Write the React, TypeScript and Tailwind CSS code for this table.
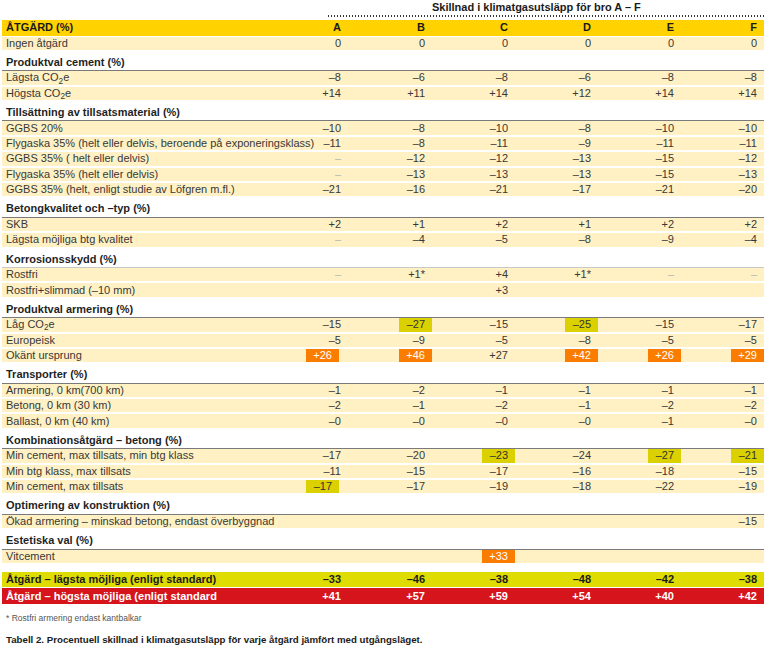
import type { ReactNode } from "react";

type Cell = string | { v: string; c: "g" | "o" };

const sections: { title: string; line?: string; rows: { label: ReactNode; vals: Cell[] }[] }[] = [
  {
    title: "Produktval cement (%)",
    rows: [
      { label: <>Lägsta CO<sub>2</sub>e</>, vals: ["–8", "–6", "–8", "–6", "–8", "–8"] },
      { label: <>Högsta CO<sub>2</sub>e</>, vals: ["+14", "+11", "+14", "+12", "+14", "+14"] },
    ],
  },
  {
    title: "Tillsättning av tillsatsmaterial (%)",
    rows: [
      { label: "GGBS 20%", vals: ["–10", "–8", "–10", "–8", "–10", "–10"] },
      { label: "Flygaska 35% (helt eller delvis, beroende på exponeringsklass)", vals: ["–11", "–8", "–11", "–9", "–11", "–11"] },
      { label: "GGBS 35% ( helt eller delvis)", vals: ["-", "–12", "–12", "–13", "–15", "–12"] },
      { label: "Flygaska 35% (helt eller delvis)", vals: ["-", "–13", "–13", "–13", "–15", "–13"] },
      { label: "GGBS 35% (helt, enligt studie av Löfgren m.fl.)", vals: ["–21", "–16", "–21", "–17", "–21", "–20"] },
    ],
  },
  {
    title: "Betongkvalitet och –typ (%)",
    rows: [
      { label: "SKB", vals: ["+2", "+1", "+2", "+1", "+2", "+2"] },
      { label: "Lägsta möjliga btg kvalitet", vals: ["-", "–4", "–5", "–8", "–9", "–4"] },
    ],
  },
  {
    title: "Korrosionsskydd (%)",
    line: "light",
    rows: [
      { label: "Rostfri", vals: ["-", "+1*", "+4", "+1*", "-", "-"] },
      { label: "Rostfri+slimmad (–10 mm)", vals: ["", "", "+3", "", "", ""] },
    ],
  },
  {
    title: "Produktval armering (%)",
    rows: [
      { label: <>Låg CO<sub>2</sub>e</>, vals: ["–15", { v: "–27", c: "g" }, "–15", { v: "–25", c: "g" }, "–15", "–17"] },
      { label: "Europeisk", vals: ["–5", "–9", "–5", "–8", "–5", "–5"] },
      {
        label: "Okänt ursprung",
        vals: [{ v: "+26", c: "o" }, { v: "+46", c: "o" }, "+27", { v: "+42", c: "o" }, { v: "+26", c: "o" }, { v: "+29", c: "o" }],
      },
    ],
  },
  {
    title: "Transporter (%)",
    rows: [
      { label: "Armering, 0 km(700 km)", vals: ["–1", "–2", "–1", "–1", "–1", "–1"] },
      { label: "Betong, 0 km (30 km)", vals: ["–2", "–1", "–2", "–1", "–2", "–2"] },
      { label: "Ballast, 0 km (40 km)", vals: ["–0", "–0", "–0", "–0", "–1", "–0"] },
    ],
  },
  {
    title: "Kombinationsåtgärd – betong (%)",
    rows: [
      { label: "Min cement, max tillsats, min btg klass", vals: ["–17", "–20", { v: "–23", c: "g" }, "–24", { v: "–27", c: "g" }, { v: "–21", c: "g" }] },
      { label: "Min btg klass, max tillsats", vals: ["–11", "–15", "–17", "–16", "–18", "–15"] },
      { label: "Min cement, max tillsats", vals: [{ v: "–17", c: "g" }, "–17", "–19", "–18", "–22", "–19"] },
    ],
  },
  {
    title: "Optimering av konstruktion (%)",
    rows: [{ label: "Ökad armering – minskad betong, endast överbyggnad", vals: ["", "", "", "", "", "–15"] }],
  },
  {
    title: "Estetiska val (%)",
    rows: [{ label: "Vitcement", vals: ["", "", { v: "+33", c: "o" }, "", "", ""] }],
  },
];

function Value({ cell, first }: { cell: Cell; first: boolean }) {
  const v = typeof cell === "string" ? cell : cell.v;
  const c = typeof cell === "string" ? "" : cell.c;
  const bg = c === "g" ? "bg-[#DBD000] text-[#333]" : c === "o" ? "bg-[#FB7D00] text-white" : v === "-" ? "text-[#b5b5b5]" : "";
  const shift = first ? (c ? "mr-[10px]" : "mr-[1px]") : "";
  return (
    <div className="flex h-full w-[83px] shrink-0 justify-end">
      <span className={`flex h-full w-[33px] items-center justify-end pr-[7px] ${bg} ${shift}`}>
        {v === "-" ? "–" : v}
      </span>
    </div>
  );
}

function Row({ label, vals }: { label: ReactNode; vals: Cell[] }) {
  return (
    <div className="flex h-[13.4px] items-center bg-[#FFF1C4] text-[#383838]">
      <div className="w-0 min-w-0 flex-1 whitespace-nowrap pl-[4px]">{label}</div>
      {vals.map((v, i) => (
        <Value key={i} cell={v} first={i === 0} />
      ))}
    </div>
  );
}

function TotalRow({ label, vals, tone }: { label: string; vals: string[]; tone: "low" | "high" }) {
  return (
    <div
      className={`flex items-center font-bold ${
        tone === "low" ? "h-[15px] bg-[#DEDC00] text-[#1a1a1a]" : "mt-[1px] h-[16px] bg-[#D6141B] text-white"
      }`}
    >
      <div className="w-0 min-w-0 flex-1 whitespace-nowrap pl-[4px]">{label}</div>
      {vals.map((v, i) => (
        <Value key={i} cell={v} first={i === 0} />
      ))}
    </div>
  );
}

export default function App() {
  return (
    <div className="h-[650px] w-[768px] overflow-hidden bg-white font-['Liberation_Sans',Arial,sans-serif] text-[11px] leading-none">
      {/* column group title */}
      <div className="ml-[328px] w-[436px] pl-[104px] pt-[1px] text-[11px] font-bold leading-[13px] text-[#1a1a1a]">
        Skillnad i klimatgasutsläpp för bro A – F
      </div>
      <div className="ml-[328px] mt-[1px] h-[1.5px] w-[436px] bg-[repeating-linear-gradient(to_right,#333_0_1.2px,transparent_1.2px_3px)]" />

      <div className="ml-[2px] mt-[3px] w-[762px]">
        <div className="flex h-[16px] items-center bg-[#FFD200] font-bold text-[#1a1a1a]">
          <div className="flex-1 pl-[4px]">ÅTGÄRD (%)</div>
          {["A", "B", "C", "D", "E", "F"].map((l, i) => (
            <Value key={l} cell={l} first={i === 0} />
          ))}
        </div>
        <div className="mt-[1px]">
          <Row label="Ingen åtgärd" vals={["0", "0", "0", "0", "0", "0"]} />
        </div>

        {sections.map((s) => (
          <div key={s.title}>
            <div
              className={`border-b pb-[1.4px] pl-[4px] pt-[6px] font-bold leading-[13px] text-[#1f1f1f] ${
                s.line === "light" ? "border-[#c8c8c8]" : "border-[#7a7a7a]"
              }`}
            >
              {s.title}
            </div>
            <div className="flex flex-col gap-[2px]">
              {s.rows.map((r, i) => (
                <Row key={i} label={r.label} vals={r.vals} />
              ))}
            </div>
          </div>
        ))}

        <div className="mt-[9px]">
          <TotalRow
            tone="low"
            label="Åtgärd – lägsta möjliga (enligt standard)"
            vals={["–33", "–46", "–38", "–48", "–42", "–38"]}
          />
          <TotalRow
            tone="high"
            label="Åtgärd – högsta möjliga (enligt standard"
            vals={["+41", "+57", "+59", "+54", "+40", "+42"]}
          />
        </div>
      </div>

      <div className="ml-[6px] mt-[8px] text-[8.5px] leading-[12px] text-[#555]">* Rostfri armering endast kantbalkar</div>
      <div className="ml-[6px] mt-[10px] text-[9.7px] font-bold leading-[12px] text-[#1a1a1a]">
        Tabell 2. Procentuell skillnad i klimatgasutsläpp för varje åtgärd jämfört med utgångsläget.
      </div>
    </div>
  );
}
